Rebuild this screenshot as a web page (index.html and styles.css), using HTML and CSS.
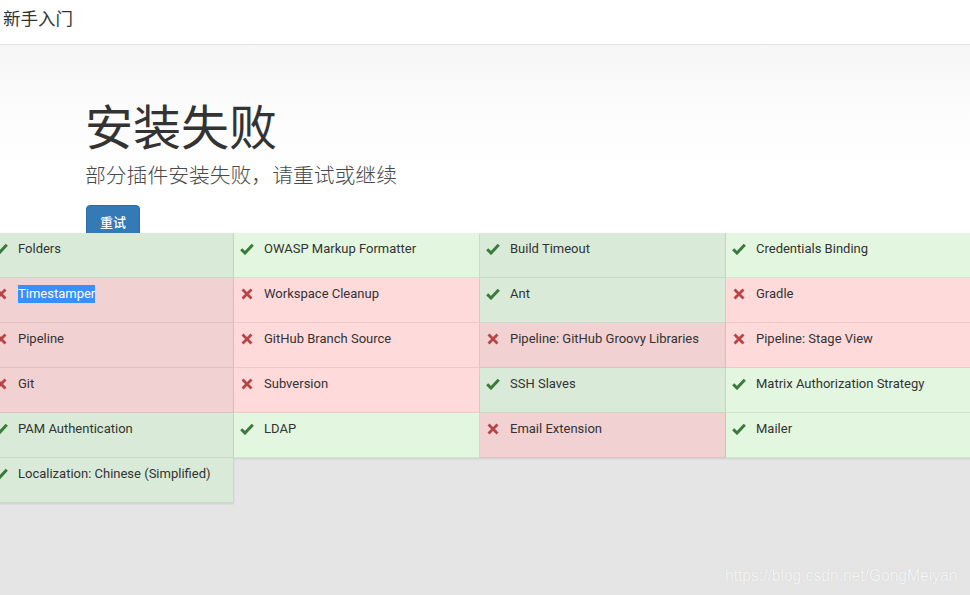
FILE: index.html
```html
<!DOCTYPE html>
<html lang="zh-CN">
<head>
<meta charset="utf-8">
<title>新手入门</title>
<link rel="stylesheet" href="styles.css">
</head>
<body>
<header class="topbar">新手入门</header>
<section class="jumbo">
  <h1 class="title">安装失败</h1>
  <p class="lead">部分插件安装失败，请重试或继续</p>
  <button class="btn">重试</button>
</section>
<section class="plugins">
  <div class="cell ok"><svg class="ic" viewBox="0 0 14 12"><path d="M1.2 6.3 L5 10 L12.8 1.8" /></svg><span>Folders</span></div>
  <div class="cell ok"><svg class="ic" viewBox="0 0 14 12"><path d="M1.2 6.3 L5 10 L12.8 1.8" /></svg><span>OWASP Markup Formatter</span></div>
  <div class="cell ok"><svg class="ic" viewBox="0 0 14 12"><path d="M1.2 6.3 L5 10 L12.8 1.8" /></svg><span>Build Timeout</span></div>
  <div class="cell ok"><svg class="ic" viewBox="0 0 14 12"><path d="M1.2 6.3 L5 10 L12.8 1.8" /></svg><span>Credentials Binding</span></div>

  <div class="cell fail"><svg class="ic" viewBox="0 0 14 12"><path d="M2.5 1.5 L11.5 10.5 M11.5 1.5 L2.5 10.5" /></svg><span class="sel">Timestamper</span></div>
  <div class="cell fail"><svg class="ic" viewBox="0 0 14 12"><path d="M2.5 1.5 L11.5 10.5 M11.5 1.5 L2.5 10.5" /></svg><span>Workspace Cleanup</span></div>
  <div class="cell ok"><svg class="ic" viewBox="0 0 14 12"><path d="M1.2 6.3 L5 10 L12.8 1.8" /></svg><span>Ant</span></div>
  <div class="cell fail"><svg class="ic" viewBox="0 0 14 12"><path d="M2.5 1.5 L11.5 10.5 M11.5 1.5 L2.5 10.5" /></svg><span>Gradle</span></div>

  <div class="cell fail"><svg class="ic" viewBox="0 0 14 12"><path d="M2.5 1.5 L11.5 10.5 M11.5 1.5 L2.5 10.5" /></svg><span>Pipeline</span></div>
  <div class="cell fail"><svg class="ic" viewBox="0 0 14 12"><path d="M2.5 1.5 L11.5 10.5 M11.5 1.5 L2.5 10.5" /></svg><span>GitHub Branch Source</span></div>
  <div class="cell fail"><svg class="ic" viewBox="0 0 14 12"><path d="M2.5 1.5 L11.5 10.5 M11.5 1.5 L2.5 10.5" /></svg><span>Pipeline: GitHub Groovy Libraries</span></div>
  <div class="cell fail"><svg class="ic" viewBox="0 0 14 12"><path d="M2.5 1.5 L11.5 10.5 M11.5 1.5 L2.5 10.5" /></svg><span>Pipeline: Stage View</span></div>

  <div class="cell fail"><svg class="ic" viewBox="0 0 14 12"><path d="M2.5 1.5 L11.5 10.5 M11.5 1.5 L2.5 10.5" /></svg><span>Git</span></div>
  <div class="cell fail"><svg class="ic" viewBox="0 0 14 12"><path d="M2.5 1.5 L11.5 10.5 M11.5 1.5 L2.5 10.5" /></svg><span>Subversion</span></div>
  <div class="cell ok"><svg class="ic" viewBox="0 0 14 12"><path d="M1.2 6.3 L5 10 L12.8 1.8" /></svg><span>SSH Slaves</span></div>
  <div class="cell ok"><svg class="ic" viewBox="0 0 14 12"><path d="M1.2 6.3 L5 10 L12.8 1.8" /></svg><span>Matrix Authorization Strategy</span></div>

  <div class="cell ok"><svg class="ic" viewBox="0 0 14 12"><path d="M1.2 6.3 L5 10 L12.8 1.8" /></svg><span>PAM Authentication</span></div>
  <div class="cell ok"><svg class="ic" viewBox="0 0 14 12"><path d="M1.2 6.3 L5 10 L12.8 1.8" /></svg><span>LDAP</span></div>
  <div class="cell fail"><svg class="ic" viewBox="0 0 14 12"><path d="M2.5 1.5 L11.5 10.5 M11.5 1.5 L2.5 10.5" /></svg><span>Email Extension</span></div>
  <div class="cell ok"><svg class="ic" viewBox="0 0 14 12"><path d="M1.2 6.3 L5 10 L12.8 1.8" /></svg><span>Mailer</span></div>

  <div class="cell ok"><svg class="ic" viewBox="0 0 14 12"><path d="M1.2 6.3 L5 10 L12.8 1.8" /></svg><span>Localization: Chinese (Simplified)</span></div>
</section>
<div class="watermark">https://blog.csdn.net/GongMeiyan</div>
</body>
</html>
```
FILE: styles.css
```css
html, body {
  margin: 0;
  padding: 0;
}
body {
  width: 970px;
  height: 595px;
  overflow: hidden;
  background: #e5e5e5;
  font-family: "Noto Sans CJK SC", "Noto Sans", sans-serif;
  color: #333;
  position: relative;
}
.topbar {
  box-sizing: border-box;
  height: 45px;
  padding: 7px 0 0 3px;
  font-size: 17.5px;
  line-height: 22px;
  background: #fff;
  border-bottom: 1px solid #e3e3e3;
}
.jumbo {
  box-sizing: border-box;
  height: 188px;
  overflow: hidden;
  padding: 50px 0 0 86px;
  background: linear-gradient(180deg, #f6f6f6 0px, #fcfcfc 70px, #ffffff 130px);
}
.title {
  margin: 0 0 0 -1px;
  font-size: 48px;
  font-weight: 400;
  line-height: 58px;
  color: #333;
}
.lead {
  margin: 7px 0 0 -1px;
  font-size: 20.8px;
  line-height: 28px;
  font-weight: 300;
  color: #4a4a4a;
}
.btn {
  margin-top: 17px;
  width: 54px;
  height: 34px;
  padding: 0;
  border: 1px solid #2e6da4;
  border-radius: 4px;
  background: #337ab7;
  color: #fff;
  font-family: "Noto Sans CJK SC", sans-serif;
  font-size: 13px;
  font-weight: 500;
  line-height: 30px;
}
.plugins {
  display: grid;
  grid-template-columns: repeat(4, 246px);
  grid-auto-rows: 45px;
  margin-left: -12px;
  width: 984px;
}
.cell {
  box-sizing: border-box;
  display: flex;
  align-items: flex-start;
  padding: 7px 0 0 6px;
  border-right: 1px solid rgba(0, 0, 0, 0.07);
  border-bottom: 1px solid rgba(0, 0, 0, 0.07);
  font-family: Roboto, "Liberation Sans", sans-serif;
  font-size: 13px;
  line-height: 18px;
  color: #333;
  box-shadow: 0 1px 2px rgba(0, 0, 0, 0.1);
}
.cell.ok { background: #e3f6df; }
.cell.fail { background: #fedadb; }
.cell.ok:nth-child(odd) { background: #d9ebd8; }
.cell.fail:nth-child(odd) { background: #f2d1d2; }
.ic {
  flex: none;
  width: 14px;
  height: 12px;
  margin: 3px 10px 0 0;
  fill: none;
  stroke-width: 3;
}
.ok .ic { stroke: #3a7a3b; }
.fail .ic { stroke: #b84446; stroke-width: 2.8; }
.sel {
  background: #3a8efe;
  color: #fff;
}
.watermark {
  position: absolute;
  left: 725px;
  top: 567px;
  font-family: "Liberation Sans", Arial, sans-serif;
  font-size: 15.6px;
  color: #f4f4f4;
  text-shadow: 0 0 1px rgba(0, 0, 0, 0.12);
}
```
